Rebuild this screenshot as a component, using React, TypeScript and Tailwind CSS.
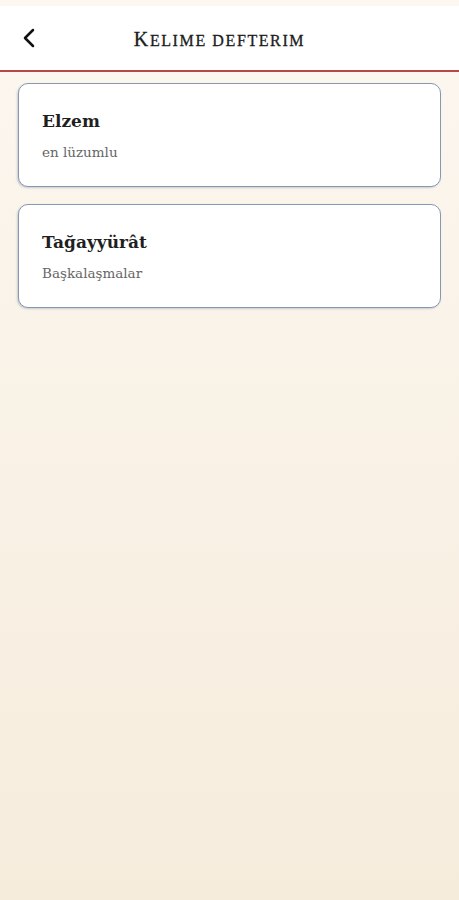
import { ChevronLeft } from "lucide-react"

const ENTRIES = [
  { title: "Elzem", subtitle: "en lüzumlu" },
  { title: "Tağayyürât", subtitle: "Başkalaşmalar" },
]

export default function App() {
  return (
    <div className="flex min-h-[900px] w-full flex-col bg-gradient-to-b from-[#fcf7f0] to-[#f6ecdc]">
      <div className="h-[6px] bg-[#fcf7f0]" />
      <header className="relative flex h-[66px] items-center justify-center border-b-2 border-[#b8474c] bg-white">
        <button className="absolute left-[13px] top-1/2 -translate-y-1/2 text-[#111]">
          <ChevronLeft className="h-[32px] w-[32px]" strokeWidth={1.9} />
        </button>
        <h1 className="mr-[20px] pt-[2px] font-['Liberation_Serif',serif] text-[16px] font-normal uppercase tracking-[0.1em] text-[#1c1c1c] [-webkit-text-stroke:0.3px_#1c1c1c]">
          <span className="text-[20px]">K</span>elime Defterim
        </h1>
      </header>

      <main className="flex flex-col gap-[17px] px-[18px] pt-[11px]">
        {ENTRIES.map((entry) => (
          <div
            key={entry.title}
            className="flex h-[104px] flex-col justify-center rounded-[10px] border-[1.5px] border-[#8399b4] bg-white px-[23px] shadow-[-1px_1px_2px_rgba(60,80,110,0.25)]"
          >
            <p className="font-['DejaVu_Serif',serif] text-[17px] font-bold leading-[24px] text-[#1f1f1f]">
              {entry.title}
            </p>
            <p className="mt-[10px] font-['DejaVu_Serif',serif] text-[13.5px] leading-[18px] text-[#666]">
              {entry.subtitle}
            </p>
          </div>
        ))}
      </main>
    </div>
  )
}
